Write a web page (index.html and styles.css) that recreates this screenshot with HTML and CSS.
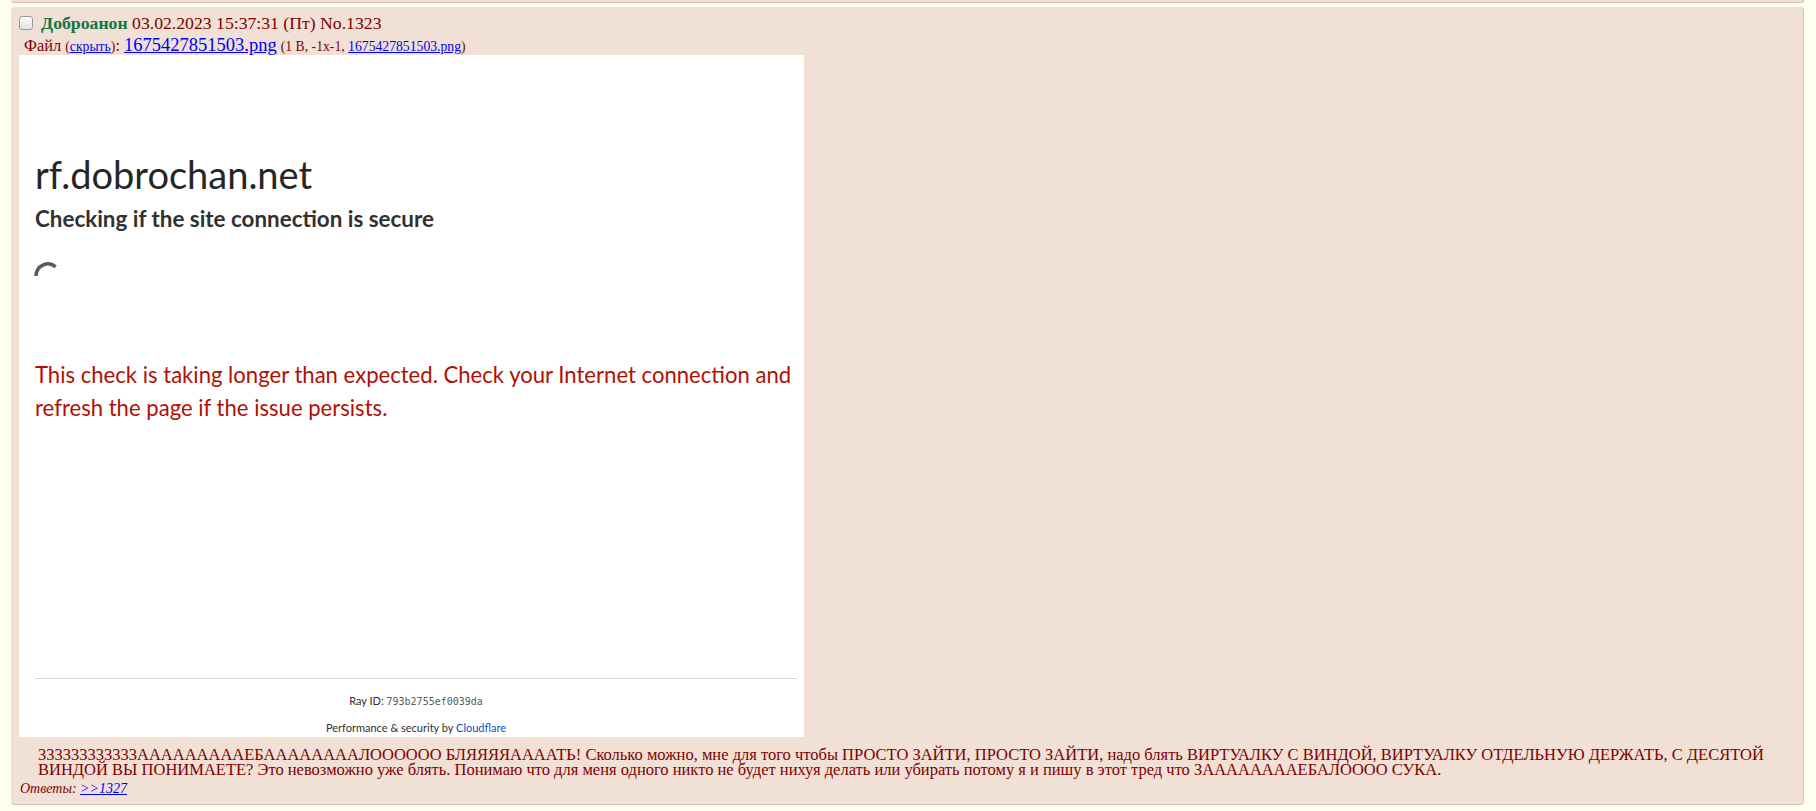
FILE: index.html
```html
<!DOCTYPE html>
<html lang="ru">
<head>
<meta charset="UTF-8" />
<meta name="viewport" content="width=device-width, initial-scale=1" />
<title>Доброчан — No.1323</title>
<link rel="stylesheet" href="styles.css">
</head>
<body>

  <!-- tail of the previous post, scrolled off the top -->
  <div class="post post-prev"></div>

  <div class="post post-main" id="post_1323">
    <div class="post-head">
      <input type="checkbox" class="post-check" name="delete" value="1323" />
      <span class="postername">Доброанон</span>&nbsp;03.02.2023 15:37:31 (Пт) <span class="reflink">No.1323</span>
    </div>

    <div class="fileinfo">Файл <small>(<a href="#">скрыть</a>)</small>: <a class="file-link" href="#">1675427851503.png</a> <small class="file-meta">(1 B, -1x-1, <a href="#">1675427851503.png</a>)</small></div>

    <!-- attached picture: a screenshot of the cloudflare check page -->
    <div class="thumb">
      <div class="cf-host">rf.dobrochan.net</div>
      <div class="cf-title">Checking if the site connection is secure</div>
      <svg class="cf-spinner" viewBox="0 0 30 30" aria-hidden="true">
        <path d="M3 15 A12 12 0 0 1 22.7 5.8" />
      </svg>
      <div class="cf-error">This check is taking longer than expected. Check your Internet connection and refresh the page if the issue persists.</div>
      <div class="cf-footer">
        <div class="cf-ray">Ray ID: <code>793b2755ef0039da</code></div>
        <div class="cf-perf">Performance &amp; security by <span class="cf-brand">Cloudflare</span></div>
      </div>
    </div>

    <div class="message">333333333333АААААААААЕБААААААААЛОООООО БЛЯЯЯЯААААТЬ! Сколько можно, мне для того чтобы ПРОСТО ЗАЙТИ, ПРОСТО ЗАЙТИ, надо блять ВИРТУАЛКУ С ВИНДОЙ, ВИРТУАЛКУ ОТДЕЛЬНУЮ ДЕРЖАТЬ, С ДЕСЯТОЙ ВИНДОЙ ВЫ ПОНИМАЕТЕ? Это невозможно уже блять. Понимаю что для меня одного никто не будет нихуя делать или убирать потому я и пишу в этот тред что ЗААААААААЕБАЛОООО СУКА.</div>

    <div class="abbrev">Ответы: <a href="#">&gt;&gt;1327</a></div>
  </div>

</body>
</html>
```

FILE: styles.css
```css
/* Board base */
body {
  margin: 0;
  padding: 0 12px 0 11px;
  background: #ffffee;
  color: #800000;
  font-family: "Liberation Serif", "Times New Roman", serif;
  font-size: 16px;
}

a {
  color: #0000ee;
}

/* Post boxes */
.post {
  background: #f0e0d6;
  border-right: 1px solid #d9bfb7;
  border-bottom: 1px solid #d9bfb7;
  border-radius: 4px;
}
.post-prev {
  height: 2px;
  border-radius: 0 0 4px 4px;
  margin-bottom: 4px;
}
.post-main {
  padding: 6px 8px 7px 8px;
}

/* Header: checkbox, name, date, number */
.post-head {
  display: flex;
  align-items: center;
  height: 20px;
  line-height: 20px;
  font-size: 17.7px;
  white-space: pre;
}
.post-check {
  appearance: none;
  width: 14px;
  height: 14px;
  margin: 0 8px 0 0;
  border: 1px solid #9a9a9a;
  border-radius: 3px;
  background: linear-gradient(#fbfbfb, #e2e2e2);
  box-sizing: border-box;
}
.postername {
  color: #117743;
  font-weight: bold;
}

/* File line */
.fileinfo {
  margin: 2px 0 0 5px;
  line-height: 20px;
  height: 20px;
  font-size: 16.4px;
}
.fileinfo small {
  font-size: 13.7px;
}
.file-link {
  font-size: 18.5px;
}

/* Attached screenshot */
.thumb {
  display: flex;
  flex-direction: column;
  align-items: flex-start;
  width: 785px;
  height: 682px;
  box-sizing: border-box;
  padding: 96px 7px 0 16px;
  background: #fff;
  color: #313131;
  font-family: Lato, "Open Sans", sans-serif;
}
.cf-host {
  font-size: 38px;
  line-height: 46px;
  color: #262626;
}
.cf-title {
  margin-top: 9px;
  font-size: 22.4px;
  font-weight: bold;
  line-height: 26px;
  color: #313131;
}
.cf-spinner {
  width: 30px;
  height: 30px;
  margin: 29px 0 0 -2px;
  fill: none;
  stroke: #595959;
  stroke-width: 3.5;
}
.cf-error {
  margin-top: 68px;
  font-size: 22.1px;
  line-height: 32.5px;
  color: #b20f03;
}
.cf-footer {
  align-self: stretch;
  margin-top: auto;
  padding: 14px 0 1px;
  border-top: 1px solid #d9d9d9;
  font-size: 11px;
  line-height: 16px;
  text-align: center;
  color: #313131;
}
.cf-ray code {
  font-family: "DejaVu Sans Mono", monospace;
  font-size: 10px;
  color: #595959;
}
.cf-perf {
  margin-top: 10px;
}
.cf-brand {
  color: #0051c3;
}

/* Message and replies */
.message {
  margin: 10px 0 0 19px;
  font-size: 16.5px;
  line-height: 15px;
}
.abbrev {
  margin: 4px 0 0 1px;
  font-size: 14px;
  line-height: 16px;
  font-style: italic;
}
```
